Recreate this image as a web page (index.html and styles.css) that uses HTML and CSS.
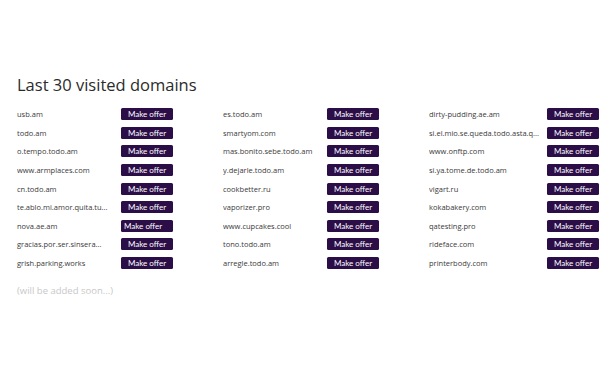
FILE: index.html
```html
<!DOCTYPE html>
<html>
<head>
<meta charset="utf-8">
<link rel="stylesheet" href="styles.css">
</head>
<body>
<div class="page">
  <h1 class="title">Last 30 visited domains</h1>
  <div class="cols">
    <div class="col col-a">
      <div class="row"><span class="name">usb.am</span><span class="btn">Make offer</span></div>
      <div class="row"><span class="name">todo.am</span><span class="btn">Make offer</span></div>
      <div class="row"><span class="name">o.tempo.todo.am</span><span class="btn">Make offer</span></div>
      <div class="row"><span class="name">www.armplaces.com</span><span class="btn">Make offer</span></div>
      <div class="row"><span class="name">cn.todo.am</span><span class="btn">Make offer</span></div>
      <div class="row"><span class="name">te.ablo.mi.amor.quita.tu...</span><span class="btn">Make offer</span></div>
      <div class="row"><span class="name">nova.ae.am</span><span class="btn btn-left">Make offer</span></div>
      <div class="row"><span class="name">gracias.por.ser.sinsera...</span><span class="btn">Make offer</span></div>
      <div class="row"><span class="name">grish.parking.works</span><span class="btn">Make offer</span></div>
    </div>
    <div class="col col-b">
      <div class="row"><span class="name">es.todo.am</span><span class="btn">Make offer</span></div>
      <div class="row"><span class="name">smartyom.com</span><span class="btn">Make offer</span></div>
      <div class="row"><span class="name">mas.bonito.sebe.todo.am</span><span class="btn">Make offer</span></div>
      <div class="row"><span class="name">y.dejarle.todo.am</span><span class="btn">Make offer</span></div>
      <div class="row"><span class="name">cookbetter.ru</span><span class="btn">Make offer</span></div>
      <div class="row"><span class="name">vaporizer.pro</span><span class="btn">Make offer</span></div>
      <div class="row"><span class="name">www.cupcakes.cool</span><span class="btn">Make offer</span></div>
      <div class="row"><span class="name">tono.todo.am</span><span class="btn">Make offer</span></div>
      <div class="row"><span class="name">arregle.todo.am</span><span class="btn">Make offer</span></div>
    </div>
    <div class="col col-c">
      <div class="row"><span class="name">dirty-pudding.ae.am</span><span class="btn">Make offer</span></div>
      <div class="row"><span class="name">si.el.mio.se.queda.todo.asta.q...</span><span class="btn">Make offer</span></div>
      <div class="row"><span class="name">www.onftp.com</span><span class="btn">Make offer</span></div>
      <div class="row"><span class="name">si.ya.tome.de.todo.am</span><span class="btn">Make offer</span></div>
      <div class="row"><span class="name">vigart.ru</span><span class="btn">Make offer</span></div>
      <div class="row"><span class="name">kokabakery.com</span><span class="btn">Make offer</span></div>
      <div class="row"><span class="name">qatesting.pro</span><span class="btn">Make offer</span></div>
      <div class="row"><span class="name">rideface.com</span><span class="btn">Make offer</span></div>
      <div class="row"><span class="name">printerbody.com</span><span class="btn">Make offer</span></div>
    </div>
  </div>
  <p class="soon">(will be added soon...)</p>
</div>
</body>
</html>
```

FILE: styles.css
```css
html, body {
  margin: 0;
  padding: 0;
  background: #ffffff;
}
.page {
  padding: 74px 17px 0 17px;
  font-family: "Open Sans", "DejaVu Sans", sans-serif;
  color: #333333;
}
.title {
  margin: 0;
  font-size: 16.5px;
  font-weight: 400;
  line-height: 22px;
  color: #2b2b2b;
}
.cols {
  display: flex;
  margin-top: 9px;
}
.col {
  display: flex;
  flex-direction: column;
  flex-shrink: 0;
}
.col-a, .col-b {
  width: 206px;
}
.col-a .name, .col-b .name {
  width: 104px;
}
.col-c .name {
  width: 118px;
}
.row {
  display: flex;
  align-items: center;
  height: 18.6px;
}
.name {
  flex-shrink: 0;
  font-size: 7.5px;
  color: #3a3a3a;
  white-space: nowrap;
  overflow: hidden;
}
.btn {
  flex-shrink: 0;
  display: flex;
  align-items: center;
  justify-content: center;
  width: 52px;
  height: 12px;
  background: #2b0d47;
  border-radius: 1.5px;
  color: #ffffff;
  font-family: Lato, "Open Sans", sans-serif;
  font-size: 8px;
  line-height: 12px;
}
.btn-left {
  justify-content: flex-start;
  padding-left: 3px;
  width: 49px;
}
.soon {
  margin: 12px 0 0 0;
  font-size: 9.5px;
  color: #c8c8c8;
}
```
